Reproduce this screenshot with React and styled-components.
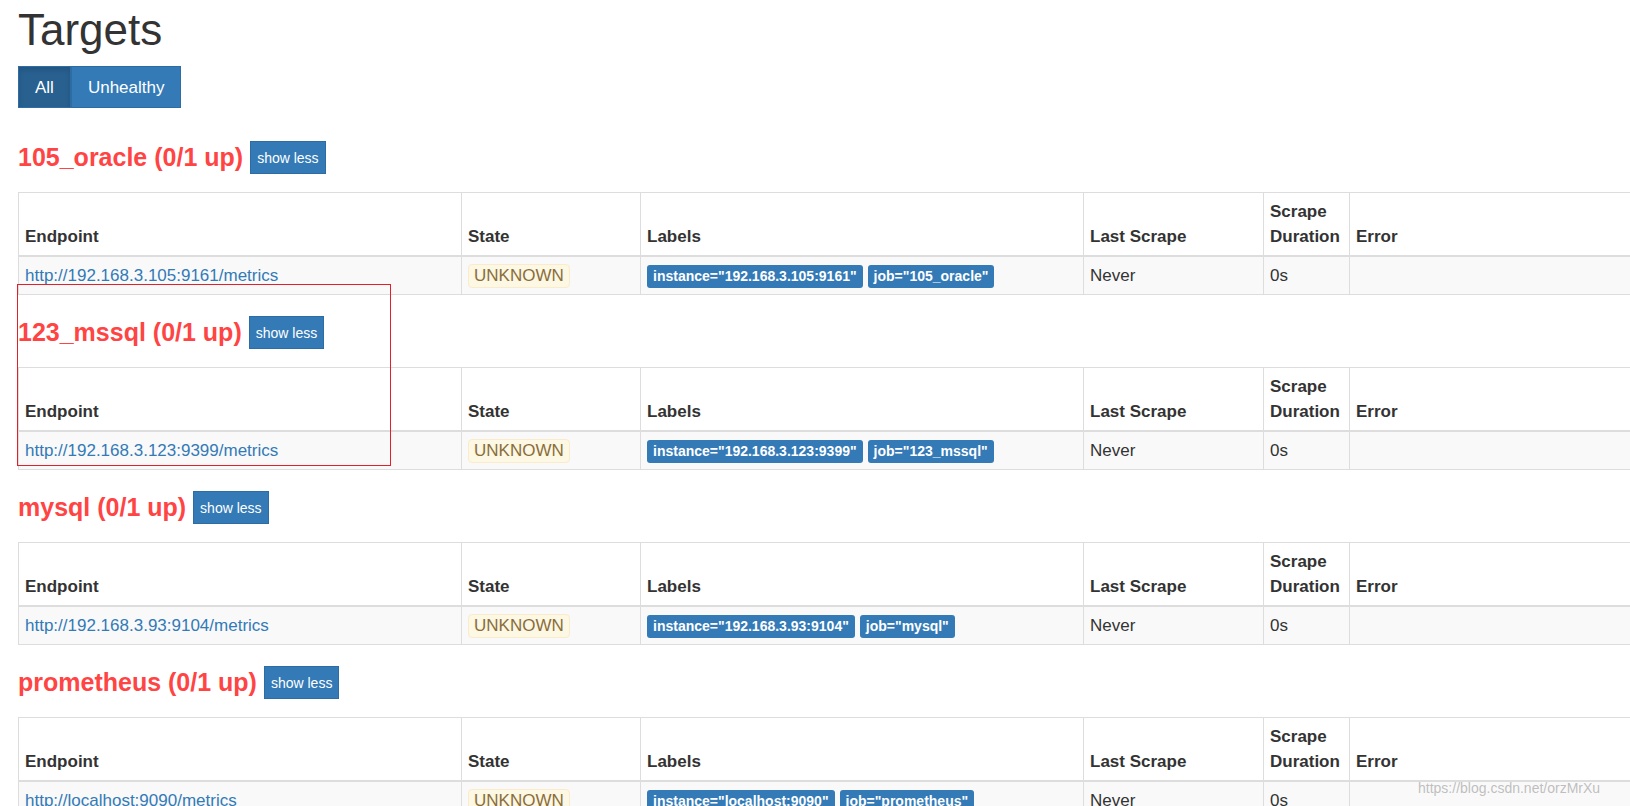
import React from 'react';
import styled, { createGlobalStyle } from 'styled-components';

const Global = createGlobalStyle`
  html, body { margin: 0; overflow: hidden; background: #fff; }
  body { font-family: "Liberation Sans", Arial, sans-serif; color: #333; font-size: 17px; }
`;

const Page = styled.div`
  position: relative;
  padding: 0 0 0 18px;
  width: 1700px;
  height: 806px;
`;

const Title = styled.h1`
  font-size: 44px;
  font-weight: 400;
  margin: 0;
  padding-top: 6px;
  height: 60px;
  line-height: 48px;
`;

const Toggle = styled.div`
  display: flex;
  margin-bottom: 12px;
`;

const ToggleBtn = styled.div`
  height: 42px;
  line-height: 42px;
  padding: 0 16px;
  color: #fff;
  font-size: 17px;
  background: ${p => (p.$active ? '#286090' : '#337ab7')};
  border: 1px solid #2e6da4;
  box-shadow: ${p => (p.$active ? 'inset 0 3px 5px rgba(0,0,0,.125)' : 'none')};
  box-sizing: border-box;
`;

const Heading = styled.div`
  display: flex;
  align-items: center;
  gap: 7px;
  height: 72px;
  padding-top: 2px;
  box-sizing: border-box;
`;

const JobName = styled.h2`
  margin: 0;
  font-size: 25px;
  font-weight: 700;
  color: #f44;
`;

const SmallBtn = styled.span`
  background: #337ab7;
  border: 1px solid #2e6da4;
  color: #fff;
  font-size: 14px;
  padding: 0 6px;
  height: 33px;
  line-height: 33px;
  box-sizing: border-box;
`;

const Table = styled.table`
  border-collapse: collapse;
  width: 1640px;
  table-layout: fixed;
  border: 1px solid #ddd;
`;

const Th = styled.th`
  text-align: left;
  vertical-align: bottom;
  font-weight: 700;
  border: 1px solid #ddd;
  border-bottom: 2px solid #ddd;
  padding: 6px;
  height: 50px;
  line-height: 25px;
`;

const Td = styled.td`
  border: 1px solid #ddd;
  padding: 6px;
  height: 25px;
  line-height: 24px;
  background: #f9f9f9;
`;

const Link = styled.a`
  color: #337ab7;
  text-decoration: none;
`;

const Unknown = styled.span`
  display: inline-block;
  background: #fcf8e3;
  border: 1px solid #faebcc;
  color: #8a6d3b;
  border-radius: 4px;
  padding: 0 5px;
  line-height: 22px;
`;

const Label = styled.span`
  display: inline-block;
  background: #337ab7;
  color: #fff;
  font-size: 14px;
  font-weight: 700;
  border-radius: 3px;
  padding: 0 6px;
  line-height: 23px;
  margin-right: 5px;
  vertical-align: middle;
`;

const Highlight = styled.div`
  position: absolute;
  left: 17px;
  top: 284px;
  width: 372px;
  height: 180px;
  border: 1.5px solid #e0202a;
  pointer-events: none;
`;

const Watermark = styled.div`
  position: absolute;
  left: 1418px;
  top: 780px;
  font-size: 14px;
  color: rgba(150,150,150,.6);
  white-space: nowrap;
`;

const jobs = [
  { name: '105_oracle', url: 'http://192.168.3.105:9161/metrics', inst: '192.168.3.105:9161' },
  { name: '123_mssql', url: 'http://192.168.3.123:9399/metrics', inst: '192.168.3.123:9399' },
  { name: 'mysql', url: 'http://192.168.3.93:9104/metrics', inst: '192.168.3.93:9104' },
  { name: 'prometheus', url: 'http://localhost:9090/metrics', inst: 'localhost:9090' },
];

export default function App() {
  return (
    <Page>
      <Global />
      <Title>Targets</Title>
      <Toggle>
        <ToggleBtn $active>All</ToggleBtn>
        <ToggleBtn>Unhealthy</ToggleBtn>
      </Toggle>
      {jobs.map(j => (
        <div key={j.name}>
          <Heading>
            <JobName>{j.name} (0/1 up)</JobName>
            <SmallBtn>show less</SmallBtn>
          </Heading>
          <Table>
            <colgroup>
              <col style={{ width: 443 }} />
              <col style={{ width: 179 }} />
              <col style={{ width: 443 }} />
              <col style={{ width: 180 }} />
              <col style={{ width: 86 }} />
              <col />
            </colgroup>
            <thead>
              <tr>
                <Th>Endpoint</Th>
                <Th>State</Th>
                <Th>Labels</Th>
                <Th>Last Scrape</Th>
                <Th>Scrape Duration</Th>
                <Th>Error</Th>
              </tr>
            </thead>
            <tbody>
              <tr>
                <Td><Link href="#">{j.url}</Link></Td>
                <Td><Unknown>UNKNOWN</Unknown></Td>
                <Td>
                  <Label>instance="{j.inst}"</Label>
                  <Label>job="{j.name}"</Label>
                </Td>
                <Td>Never</Td>
                <Td>0s</Td>
                <Td></Td>
              </tr>
            </tbody>
          </Table>
        </div>
      ))}
      <Highlight />
      <Watermark>https://blog.csdn.net/orzMrXu</Watermark>
    </Page>
  );
}
